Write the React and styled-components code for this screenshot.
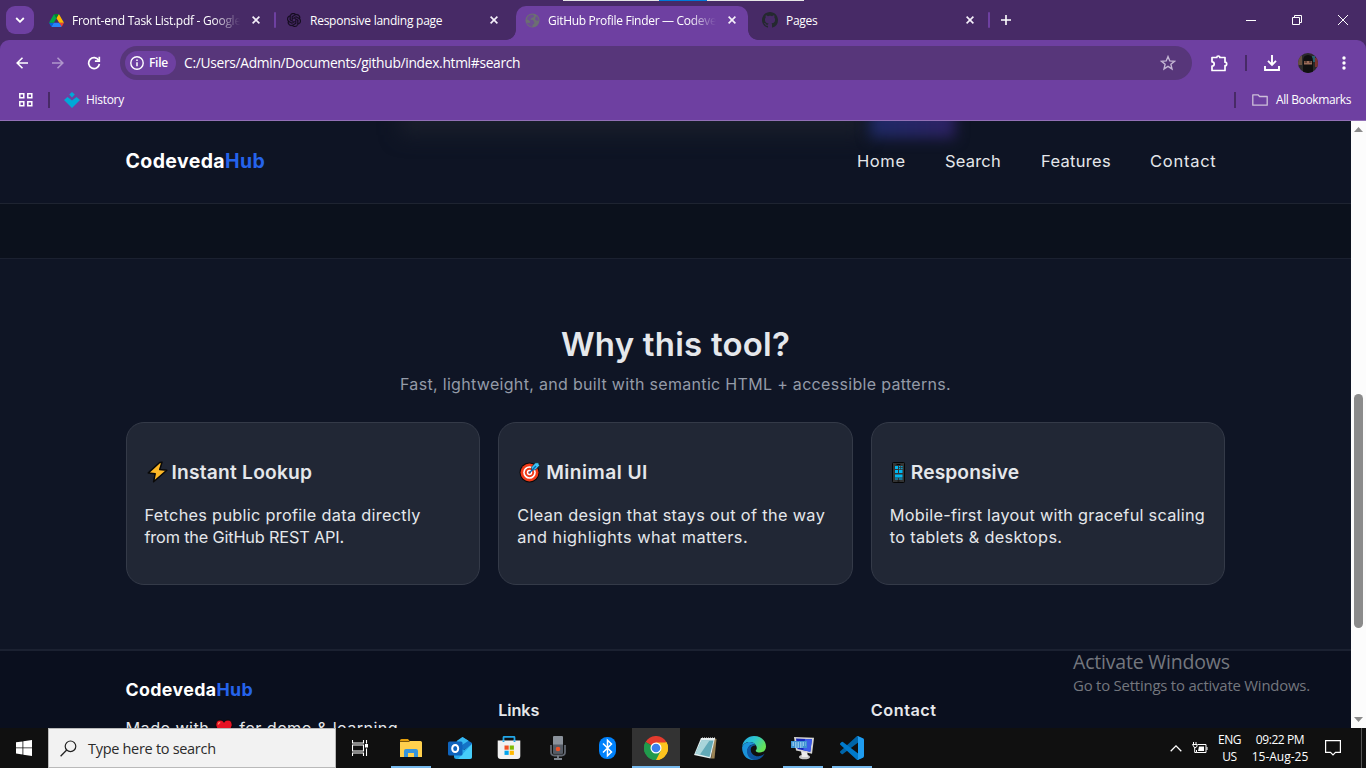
import React from "react";
import styled, { createGlobalStyle, css } from "styled-components";

const UI = `"Open Sans", "Noto Sans", sans-serif`;
const SITE = `Inter, "Liberation Sans", sans-serif`;

const Global = createGlobalStyle`
  * { box-sizing: border-box; }
  body { margin: 0; background: #101010; overflow: hidden; }
  svg { display: block; flex: none; }
`;

const Screen = styled.div`
  position: relative;
  width: 1366px;
  height: 768px;
  display: flex;
  flex-direction: column;
  overflow: hidden;
  font-family: ${UI};
  color: #fff;
`;

/* ---------- text ---------- */
const Label = styled.span`
  font-size: ${(p) => p.$size || 12}px;
  letter-spacing: ${(p) => p.$ls || 0}px;
  line-height: ${(p) => p.$lh || 16}px;
  font-weight: ${(p) => p.$weight || 400};
  white-space: nowrap;
`;

/* ---------- tab strip ---------- */
const TabStrip = styled.div`
  height: 40px;
  flex: none;
  display: flex;
  align-items: flex-start;
  background: #472a66;
  padding-left: 6px;
`;
const TabSearch = styled.div`
  width: 28px;
  height: 28px;
  margin: 6px 5px 0 0;
  border-radius: 9px;
  background: #6e40a1;
  display: grid;
  place-items: center;
`;
const TabCell = styled.div`
  position: relative;
  width: 238px;
  height: 40px;
  flex: none;
  padding: 6px 5px 0 1px;
  &::after {
    content: "";
    display: ${(p) => (p.$divider ? "block" : "none")};
    position: absolute;
    right: 1px;
    top: 12px;
    width: 2px;
    height: 16px;
    border-radius: 1px;
    background: #6e40a1;
  }
`;
const TabBody = styled.div`
  position: relative;
  height: 34px;
  display: flex;
  align-items: center;
  padding: 0 10px 6px 8px;
  border-radius: 10px 10px 0 0;
  background: ${(p) => (p.$active ? "#6e40a1" : "transparent")};
  ${(p) =>
    p.$active &&
    css`
      &::before,
      &::after {
        content: "";
        position: absolute;
        bottom: 0;
        width: 10px;
        height: 10px;
      }
      &::before {
        left: -10px;
        background: radial-gradient(circle at 0 0, #472a66 9.5px, #6e40a1 10.2px);
      }
      &::after {
        right: -10px;
        background: radial-gradient(circle at 100% 0, #472a66 9.5px, #6e40a1 10.2px);
      }
    `}
`;
const TabTitle = styled(Label)`
  width: 168px;
  margin-left: 8px;
  overflow: hidden;
  padding-top: 1px;
  -webkit-mask-image: ${(p) =>
    p.$fade ? "linear-gradient(90deg, #000 84%, transparent 100%)" : "none"};
`;
const Favicon = styled.div`
  width: 16px;
  height: 16px;
  display: grid;
  place-items: center;
`;
const CloseBox = styled.div`
  flex: 1;
  display: flex;
  justify-content: flex-end;
  padding-right: 2px;
`;
const NewTab = styled.div`
  width: 28px;
  height: 40px;
  margin-left: 1px;
  display: grid;
  place-items: center;
`;
const WindowControls = styled.div`
  margin-left: auto;
  display: flex;
  width: 138px;
  height: 40px;
`;
const WindowButton = styled.div`
  width: 46px;
  display: grid;
  place-items: center;
`;
const TopSliver = styled.div`
  position: absolute;
  top: 0;
  left: 563px;
  width: 241px;
  height: 1px;
  background: linear-gradient(90deg, #e6e6e6 96px, #0078d7 96px 144px, #e6e6e6 144px);
`;

/* ---------- toolbar ---------- */
const ToolbarBack = styled.div`
  flex: none;
  background: #472a66;
`;
const Toolbar = styled.div`
  height: 46px;
  display: flex;
  align-items: center;
  padding-left: 4px;
  background: #6e40a1;
  border-radius: 9px 9px 0 0;
`;
const IconButton = styled.div`
  width: ${(p) => p.$w || 36}px;
  height: 34px;
  flex: none;
  display: grid;
  place-items: center;
  opacity: ${(p) => (p.$dim ? 0.45 : 1)};
`;
const Omnibox = styled.div`
  width: 1072px;
  height: 34px;
  flex: none;
  margin-left: 8px;
  border-radius: 17px;
  background: #57367a;
  display: flex;
  align-items: center;
  padding: 0 16px 0 5px;
`;
const FileChip = styled.div`
  width: 51px;
  height: 24px;
  border-radius: 12px;
  background: #6e40a1;
  display: flex;
  align-items: center;
  gap: 5px;
  padding-left: 5px;
  margin-right: 8px;
`;
const StarSlot = styled.div`
  margin-left: auto;
`;
const Divider = styled.div`
  width: 2px;
  height: 16px;
  flex: none;
  background: #472a66;
`;
const DividerSlot = styled.div`
  width: 30px;
  display: grid;
  place-items: center;
`;
const Bookmarks = styled.div`
  height: 34px;
  flex: none;
  display: flex;
  align-items: center;
  background: #6e40a1;
  padding: 0 15px 6px 18px;
`;
const BookmarkName = styled(Label)`
  margin-left: ${(p) => p.$gap}px;
`;
const BookmarkRight = styled.div`
  margin-left: auto;
  display: flex;
  align-items: center;
`;
const FolderSlot = styled.div`
  margin-left: 16px;
`;
const ChromeEdge = styled.div`
  height: 1px;
  flex: none;
  background: #9270b6;
`;

/* ---------- web page ---------- */
const Viewport = styled.div`
  height: 607px;
  flex: none;
  display: flex;
`;
const Site = styled.div`
  position: relative;
  width: 1351px;
  overflow: hidden;
  background: #0b111c;
  font-family: ${SITE};
  color: #e5e7eb;
`;
const Glow = styled.div`
  position: absolute;
  top: ${(p) => p.$top}px;
  left: ${(p) => p.$left}px;
  width: ${(p) => p.$width}px;
  height: ${(p) => p.$height}px;
  background: ${(p) => p.$fill};
  filter: blur(${(p) => p.$blur}px);
`;
const Nav = styled.header`
  position: relative;
  overflow: hidden;
  height: 83px;
  background: #0e1424;
  border-bottom: 1px solid #1e2431;
  padding: 0 125.5px;
`;
const NavInner = styled.div`
  position: relative;
  height: 80px;
  display: flex;
  align-items: center;
`;
const Brand = styled.div`
  font-size: ${(p) => p.$size}px;
  font-weight: 700;
  line-height: 24px;
  letter-spacing: ${(p) => p.$ls}px;
  color: #fff;
  span { color: #2563eb; }
`;
const NavLinks = styled.nav`
  margin-left: auto;
  padding-right: 9.5px;
  display: flex;
  gap: 40px;
`;
const NavLink = styled.a`
  width: ${(p) => p.$w}px;
  font-size: 16.500px;
  line-height: 24px;
  letter-spacing: ${(p) => p.$ls}px;
  white-space: nowrap;
`;
const Strip = styled.div`
  height: 54px;
`;
const Section = styled.section`
  height: 393px;
  background: #0f1525;
  border-top: 1px solid #1b2130;
  border-bottom: 2px solid #1b2131;
  padding: 61px 125.5px 0;
  display: flex;
  flex-direction: column;
  align-items: center;
`;
const Heading = styled.h2`
  margin: 0;
  font-size: 33px;
  font-weight: 600;
  line-height: 48px;
  letter-spacing: ${(p) => p.$ls}px;
`;
const Sub = styled.p`
  margin: 4px 0 26px;
  font-size: 16px;
  line-height: 24px;
  letter-spacing: ${(p) => p.$ls}px;
  color: #949ba8;
  white-space: nowrap;
`;
const Cards = styled.div`
  width: 100%;
  display: grid;
  grid-template-columns: repeat(3, 1fr);
  gap: 18px;
`;
const Card = styled.article`
  height: 163px;
  border: 1px solid #343a48;
  border-radius: 18px;
  background: #212735;
  padding: 37px 0 0 18px;
`;
const CardTitle = styled.h3`
  margin: 0 0 20px;
  display: flex;
  align-items: center;
  font-size: 19.200px;
  font-weight: 600;
  line-height: 24px;
  letter-spacing: ${(p) => p.$ls}px;
  svg { margin: 0 ${(p) => p.$after}px 0 2px; }
`;
const CardLine = styled.div`
  font-size: 16.300px;
  line-height: 22px;
  letter-spacing: ${(p) => p.$ls}px;
  white-space: nowrap;
`;
const Footer = styled.footer`
  height: 140px;
  background: #0a0f1e;
  padding: 27px 125.5px 0;
  display: grid;
  grid-template-columns: 372.67px 372.67px 1fr;
`;
const Made = styled.p`
  margin: 14px 0 0;
  display: flex;
  align-items: center;
  font-size: 16.300px;
  line-height: 24px;
  letter-spacing: ${(p) => p.$ls}px;
  white-space: nowrap;
  svg { margin: 0 6px; }
`;
const FootHead = styled.h4`
  margin: 20px 0 0;
  font-size: 16.300px;
  font-weight: 600;
  line-height: 24px;
  letter-spacing: ${(p) => p.$ls}px;
`;
const ScrollTrack = styled.div`
  width: 15px;
  background: #fcfcfc;
  display: flex;
  flex-direction: column;
  align-items: center;
  padding: 6px 0 6px;
`;
const ScrollThumb = styled.div`
  width: 9px;
  height: 234px;
  margin: 262px 0 auto;
  border-radius: 5px;
  background: #8b8b8b;
`;
const Watermark = styled.div`
  position: absolute;
  left: 1073px;
  top: 650px;
  display: flex;
  flex-direction: column;
  gap: 1px;
  color: #74777e;
`;

/* ---------- taskbar ---------- */
const Taskbar = styled.div`
  height: 40px;
  flex: none;
  display: flex;
  background: #101010;
`;
const TaskCell = styled.div`
  position: relative;
  width: 48px;
  height: 40px;
  margin-right: ${(p) => p.$gap || 0}px;
  display: grid;
  place-items: center;
  background: ${(p) => (p.$active ? "#333" : "transparent")};
  &::after {
    content: "";
    position: absolute;
    bottom: 0;
    left: ${(p) => (p.$active ? 0 : 4)}px;
    right: ${(p) => (p.$active ? 0 : 4)}px;
    height: 2px;
    background: ${(p) => (p.$open ? "#76b9ed" : "transparent")};
  }
`;
const SearchBox = styled.div`
  width: 288px;
  height: 40px;
  border: 1px solid #b9b9b9;
  background: #f2f2f2;
  color: #2b2b2b;
  display: flex;
  align-items: center;
  gap: 11px;
  padding: 1px 0 0 11px;
`;
const Apps = styled.div`
  display: flex;
  margin-left: 3px;
`;
const Tray = styled.div`
  margin-left: auto;
  width: 198px;
  display: flex;
  align-items: center;
`;
const TraySlot = styled.div`
  width: ${(p) => p.$w}px;
  display: flex;
  flex-direction: column;
  align-items: center;
`;
const ShowDesktop = styled.div`
  width: 5px;
  height: 40px;
  margin-left: auto;
  border-left: 1px solid #555;
`;

/* ---------- icons ---------- */
const Svg = ({ w = 16, h, vb, children, ...r }) => (
  <svg width={w} height={h || w} viewBox={vb || `0 0 ${w} ${h || w}`} fill="none" {...r}>
    {children}
  </svg>
);

const Drive = () => (
  <Svg w={15} h={13} vb="0 0 87.3 78">
    <path fill="#0066da" d="m6.6 66.85 3.85 6.65c.8 1.4 1.95 2.5 3.3 3.3l13.75-23.8h-27.5c0 1.55.4 3.1 1.2 4.5z" />
    <path fill="#00ac47" d="m43.65 25-13.75-23.8c-1.35.8-2.5 1.9-3.3 3.3l-25.4 44a9.06 9.06 0 0 0 -1.2 4.5h27.5z" />
    <path fill="#ea4335" d="m73.55 76.8c1.35-.8 2.5-1.9 3.3-3.3l1.6-2.75 7.65-13.25c.8-1.4 1.2-2.95 1.2-4.5h-27.502l5.852 11.5z" />
    <path fill="#00832d" d="m43.65 25 13.75-23.8c-1.35-.8-2.9-1.2-4.5-1.2h-18.5c-1.6 0-3.15.45-4.5 1.2z" />
    <path fill="#2684fc" d="m59.8 53h-32.3l-13.75 23.8c1.35.8 2.9 1.2 4.5 1.2h50.8c1.6 0 3.15-.45 4.5-1.2z" />
    <path fill="#ffba00" d="m73.4 26.5-12.7-22c-.8-1.4-1.95-2.5-3.3-3.3l-13.75 23.8 16.15 28h27.45c0-1.55-.4-3.1-1.2-4.5z" />
  </Svg>
);
const Knot = () => (
  <Svg w={14} vb="0 0 24 24">
    <path
      fill="#160d20"
      stroke="#160d20"
      strokeWidth=".5"
      d="M22.28 9.82a5.98 5.98 0 0 0-.52-4.91 6.05 6.05 0 0 0-6.51-2.9A6.07 6.07 0 0 0 4.98 4.18a5.98 5.98 0 0 0-4 2.9 6.05 6.05 0 0 0 .74 7.1 5.98 5.98 0 0 0 .51 4.91 6.05 6.05 0 0 0 6.51 2.9A5.98 5.98 0 0 0 13.26 24a6.06 6.06 0 0 0 5.77-4.21 5.99 5.99 0 0 0 4-2.9 6.06 6.06 0 0 0-.75-7.07zm-9.02 12.61a4.48 4.48 0 0 1-2.88-1.04l.14-.08 4.78-2.76a.8.8 0 0 0 .39-.68v-6.74l2.02 1.17a.07.07 0 0 1 .04.05v5.58a4.5 4.5 0 0 1-4.49 4.5zM3.6 18.3a4.47 4.47 0 0 1-.54-3.01l.14.08 4.78 2.76a.77.77 0 0 0 .78 0l5.84-3.37v2.33a.08.08 0 0 1-.03.06L9.74 19.95a4.5 4.5 0 0 1-6.14-1.65zM2.34 7.9a4.49 4.49 0 0 1 2.37-1.97V11.6a.77.77 0 0 0 .39.68l5.81 3.35-2.02 1.17a.08.08 0 0 1-.07 0l-4.83-2.79A4.5 4.5 0 0 1 2.34 7.87zm16.6 3.86-5.84-3.39L15.12 7.2a.08.08 0 0 1 .07 0l4.83 2.79a4.49 4.49 0 0 1-.68 8.1v-5.68a.79.79 0 0 0-.4-.66zm2.01-3.02-.14-.09-4.77-2.78a.78.78 0 0 0-.79 0L9.41 9.23V6.9a.07.07 0 0 1 .03-.06l4.83-2.79a4.5 4.5 0 0 1 6.68 4.66zM8.31 12.86l-2.02-1.16a.08.08 0 0 1-.04-.06V6.07a4.5 4.5 0 0 1 7.38-3.45l-.14.08-4.78 2.76a.8.8 0 0 0-.4.68zm1.1-2.36L12 9l2.61 1.5v3L12 15l-2.6-1.5z"
    />
  </Svg>
);
const Globe = () => (
  <Svg w={15}>
    <circle cx="7.5" cy="7.5" r="7" fill="#6c6f72" />
    <path
      d="M3 3.5C4.2 2 6 1.3 7.7 1.4L9.3 3 8 4.6 6.3 5 5.5 6.8l2.3.3L9.3 9v1.6L7.5 12v1.8C5 14 2.4 12.200 1.500 9.800L4.500 10l.8-1.500L3.300 6.800 1.500 6.600zM10.500 4.500l1-1.500 1.700 2.200.6 2.300-2 .2L10 6.300z"
      fill="#6e40a1"
      opacity=".7"
    />
  </Svg>
);
const GitHubMark = () => (
  <Svg w={16}>
    <path
      fill="#24292f"
      d="M8 0C3.58 0 0 3.58 0 8c0 3.54 2.29 6.53 5.47 7.59.4.07.55-.17.55-.38 0-.19-.01-.82-.01-1.49-2.01.37-2.53-.49-2.69-.94-.09-.23-.48-.94-.82-1.13-.28-.15-.68-.52-.01-.53.63-.01 1.08.58 1.23.82.72 1.21 1.87.87 2.33.66.07-.52.28-.87.51-1.07-1.78-.2-3.64-.89-3.64-3.95 0-.87.31-1.59.82-2.15-.08-.2-.36-1.02.08-2.12 0 0 .67-.21 2.2.82.64-.18 1.32-.27 2-.27s1.36.09 2 .27c1.530-1.040 2.200-.82 2.200-.82.44 1.100.16 1.920.08 2.120.51.56.82 1.270.82 2.150 0 3.070-1.870 3.750-3.650 3.950.29.25.54.73.54 1.480 0 1.070-.01 1.930-.01 2.200 0 .21.15.46.55.38A8.010 8.010 0 0 0 16 8c0-4.420-3.580-8-8-8z"
    />
  </Svg>
);
const Close = () => (
  <Svg w={8}>
    <path d="M.6.6l6.800 6.800M7.400.6L.6 7.400" stroke="#f5f0fa" strokeWidth="1.600" />
  </Svg>
);
const Bolt = () => (
  <Svg w={21} h={22}>
    <path d="M12.700 1.500L1.300 11.900l6.900.8L6.600 20.800 19.800 9.300l-7.100-.7L15 1.300z" fill="#fdb827" stroke="#090909" strokeWidth="1.500" strokeLinejoin="round" />
  </Svg>
);
const Target = () => (
  <Svg w={22} h={22}>
    <circle cx="10.500" cy="11.500" r="10" fill="#0a0a0a" />
    <circle cx="10.500" cy="11.500" r="9" fill="#f03a17" />
    <circle cx="10.500" cy="11.500" r="6.300" fill="#fff" />
    <circle cx="10.500" cy="11.500" r="4.700" fill="#f03a17" />
    <circle cx="10.500" cy="11.500" r="2.700" fill="#fff" />
    <circle cx="10.500" cy="11.500" r="1.300" fill="#f03a17" />
    <path d="M12.500 6L16.500 1.800h3.300V3.500l1 .8-4.300 4.500-4 .4z" fill="#3fc4f5" stroke="#0a0a0a" strokeWidth=".5" />
    <path d="M10.300 12L17 5" stroke="#0067b8" strokeWidth="1.300" />
  </Svg>
);
const Phone = () => (
  <Svg w={13} h={21}>
    <rect x=".5" y=".5" width="12" height="20" rx="1" fill="#333" stroke="#050505" />
    <path d="M4.500 2.500h4M5.500 19h2" stroke="#080808" />
    <path d="M3 4h3v3H3zM3 8h3v3H3zM7 8h3.500v3H7zM3 12.500h7.500v3H3zM3 16.500h3v1H3zM7 16.500h3.500v1H7z" fill="#00b7f1" />
    <path d="M7 4h1.300v1.200H7zM9.200 4h1.300v1.200H9.200zM7 6h1.300v1.200H7zM9.200 6h1.300v1.200H9.200z" fill="#00b7f1" />
  </Svg>
);
const Heart = () => (
  <Svg w={18} h={18}>
    <path d="M9 17L2.200 9.500C-.8 5.500 1.500 1 5 1c2 0 3.300 1 4 2.300C9.700 2 11 1 13 1c3.500 0 5.800 4.500 2.800 8.500z" fill="#e81123" stroke="#0a0a0a" />
    <path d="M3.200 5.500c.2-1.300 1-2 2-2" stroke="#ff8a65" strokeWidth="1.300" />
  </Svg>
);

const Explorer = () => (
  <Svg w={22} h={18}>
    <path d="M0 1.500Q0 0 1.500 0H8l2 2.500H0z" fill="#e59f0b" />
    <path d="M0 3h9l1-1h10.500q1.500 0 1.500 1.500V18H0z" fill="#ffd04d" />
    <path d="M4 18v-6q0-2 2-2h10q2 0 2 2v6h-4v-4H8v4z" fill="#3694dc" />
  </Svg>
);
const Outlook = () => (
  <Svg w={24} h={22}>
    <path d="M6 6.500L14.500 0 24 6v2L14 14z" fill="#1473c6" />
    <path d="M9 3.700L14.500 0l6 3.800L11 10z" fill="#35b8f1" />
    <path d="M6 20V10l10 3 8-6v12.500q0 2.500-2.500 2.500H8.500Q6 22 6 20z" fill="#28a8ea" />
    <path d="M24 7v12.500q0 2.500-2.500 2.500H10z" fill="#50d9ff" opacity=".75" />
    <rect y="4.500" width="14.500" height="14" rx="1.500" fill="#0f64bd" />
    <ellipse cx="7.200" cy="11.500" rx="3" ry="3.500" stroke="#fff" strokeWidth="2" />
  </Svg>
);
const Store = () => (
  <Svg w={24} h={24}>
    <path d="M6.500 6V1.700q0-.9.900-.9h9.200q.9 0 .9.900V6" stroke="#22a7e8" strokeWidth="1.800" />
    <path d="M.7 4.500h22.600V20q0 3-3 3H3.700q-3 0-3-3z" fill="#f1f1f1" />
    <path d="M6.500 4.500V6M17.500 4.500V6" stroke="#22a7e8" strokeWidth="1.800" />
    <path d="M7.500 9.500h4.200v4.200H7.500z" fill="#f25022" />
    <path d="M12.700 9.500h4.200v4.200h-4.200z" fill="#7fba00" />
    <path d="M7.500 14.700h4.200v4.200H7.500z" fill="#00a4ef" />
    <path d="M12.700 14.700h4.200v4.200h-4.200z" fill="#ffb900" />
  </Svg>
);
const Mic = () => (
  <Svg w={16} h={24}>
    <path d="M1 9v7q0 3.500 3.500 3.500h7q3.500 0 3.500-3.500V9" stroke="#626872" strokeWidth="1.800" />
    <rect x="3" y="0" width="10" height="17.500" rx="1" fill="#8b929b" />
    <path d="M3 8.500h10v9H3z" fill="#565c66" />
    <circle cx="8" cy="13" r="2.300" fill="#ed5127" />
    <path d="M8 19.500V22M4 23h8" stroke="#7d848d" strokeWidth="1.800" />
  </Svg>
);
const Bluetooth = () => (
  <Svg w={17} h={22}>
    <rect width="17" height="22" rx="8" fill="#0082fc" />
    <path d="M4 6.500l8.500 8.500-4 3.800V3.200l4 3.800L4 15.500" stroke="#fff" strokeWidth="1.500" />
  </Svg>
);
const ChromeLogo = () => (
  <Svg w={24} vb="0 0 48 48">
    <path d="M24 24L3.200 12A24 24 0 0 1 44.800 12z" fill="#e33b2e" />
    <path d="M24 24L44.800 12A24 24 0 0 1 24 48z" fill="#fcc31e" />
    <path d="M24 24l0 24A24 24 0 0 1 3.200 12z" fill="#209a4c" />
    <path d="M24 13h21.300A24 24 0 0 1 24 48l9.500-18.500z" fill="#fcc31e" />
    <path d="M14.500 29.500L3.200 12A24 24 0 0 0 24 48l9.500-18.500z" fill="#209a4c" />
    <circle cx="24" cy="24" r="11" fill="#fff" />
    <circle cx="24" cy="24" r="8.700" fill="#3a80ee" />
  </Svg>
);
const Notepad = () => (
  <Svg w={23} h={22}>
    <path d="M20 1l2.500 1-2 19.500H17z" fill="#9b8355" />
    <path d="M7 1h14l-4.500 20.500L0 18z" fill="#e3eff0" />
    <path d="M7.500 3.500h12L15.500 20 1.500 16.500z" fill="#61aab8" />
    <path d="M7.500 3.500h8L6 17.500l-4.500-1z" fill="#a9d5da" />
    <path d="M8 1.500h13" stroke="#eee" strokeWidth="1.800" strokeDasharray="1 1" />
  </Svg>
);
const Edge = () => (
  <Svg w={24}>
    <defs>
      <linearGradient id="edgeTop" x1="0" y1="0" x2="1" y2=".5">
        <stop offset="0" stopColor="#24a5e5" />
        <stop offset=".5" stopColor="#2cc6ce" />
        <stop offset="1" stopColor="#66e256" />
      </linearGradient>
      <linearGradient id="edgeBottom" x1="0" y1="0" x2="1" y2="1">
        <stop offset="0" stopColor="#0f5aa8" />
        <stop offset="1" stopColor="#0c4f98" />
      </linearGradient>
    </defs>
    <path d="M.2 10.500C1 4.500 6 0 12 0c7.500 0 12 5.300 12 10.500 0 3.800-2.800 6-6 6-2.500 0-4.300-.8-4.300-1.800 0-.7 1.100-1 1.100-2.700C14.800 8.700 11.500 6 8 6 4 6 1.200 8 .2 10.500z" fill="url(#edgeTop)" />
    <path d="M.1 11.500C.9 8.300 4 6 7.800 6c2.500 0 5 1.200 6.200 3.200-1-.6-2-.7-2.800-.7-3.500 0-5.700 3-5.700 6.300 0 5 4.500 9 9.500 8.700C7 26 0 20 .1 11.500z" fill="#1a93da" />
    <path d="M8.800 12.800c-.6 5.200 4.500 8.200 8.700 7.200 2.500-.6 4-1.500 5-2.200C20.500 21.500 16.500 24 12.500 24 8 23.500 5 19.700 5 15.500 5 12 7.500 8.800 11.200 8.800c1 0 2 .3 2.800.8-3.200-.3-5 1.500-5.200 3.200z" fill="url(#edgeBottom)" />
  </Svg>
);
const Remote = () => (
  <Svg w={24} h={24}>
    <ellipse cx="13.500" cy="21" rx="5.500" ry="2.300" fill="#c9c9c9" />
    <path d="M10 15h6l1 6h-6z" fill="#ececec" />
    <path d="M3 1l20 .8-2 16L5 14.500z" fill="#d5d5d5" />
    <path d="M5 2.500l16 .8-1.700 12.500L6.500 13z" fill="#1526bd" />
    <path d="M14 3l7 .3-1.700 12.500-7-1.500z" fill="#3d5ee8" />
    <rect x="0" y="5" width="16" height="7" fill="#3e92d3" />
    <path d="M1.500 7h13M1.500 9h13M4 11h8" stroke="#d8f2ff" strokeDasharray="1.500 1" />
  </Svg>
);
const VSCode = () => (
  <Svg w={24} vb="0 0 100 100">
    <path d="M96.500 10.800L75.900.9a6.200 6.200 0 0 0-7.100 1.200L1.300 63.600a4.200 4.200 0 0 0 0 6.200l5.500 5a4.200 4.200 0 0 0 5.300.2L93.400 13.400c2.700-2.100 6.600-.1 6.600 3.300v-.3a6.200 6.200 0 0 0-3.500-5.600z" fill="#0065a9" />
    <path d="M96.500 89.200l-20.600 9.900a6.200 6.200 0 0 1-7.100-1.200L1.300 36.400a4.200 4.200 0 0 1 0-6.200l5.500-5a4.200 4.200 0 0 1 5.300-.2l81.300 61.600c2.700 2.100 6.600.1 6.600-3.300v.3a6.200 6.200 0 0 1-3.500 5.600z" fill="#007acc" />
    <path d="M75.900 99.100a6.200 6.200 0 0 1-7.100-1.200C71.100 100.200 75 98.600 75 95.300V4.700c0-3.300-3.900-4.900-6.200-2.600A6.200 6.200 0 0 1 75.900.9l20.600 9.900a6.200 6.200 0 0 1 3.500 5.600v67.200a6.200 6.200 0 0 1-3.500 5.600z" fill="#1f9cf0" />
  </Svg>
);

const tabs = [
  { title: "Front-end Task List.pdf - Google", icon: <Drive />, ls: -0.27, fade: true, divider: true },
  { title: "Responsive landing page", icon: <Knot />, ls: -0.25 },
  { title: "GitHub Profile Finder — Codeveda", icon: <Globe />, ls: -0.3, fade: true, active: true },
  { title: "Pages", icon: <GitHubMark />, ls: -0.3, divider: true },
];

const links = [
  { text: "Home", w: 48, ls: 0.6 },
  { text: "Search", w: 56, ls: 0.2 },
  { text: "Features", w: 69, ls: 0.3 },
  { text: "Contact", w: 66, ls: 0.75 },
];

const cards = [
  { icon: <Bolt />, after: 4, title: "Instant Lookup", tls: 0.22, lines: [["Fetches public profile data directly", 0.3], ["from the GitHub REST API.", -0.17]] },
  { icon: <Target />, after: 5, title: "Minimal UI", tls: 0.45, lines: [["Clean design that stays out of the way", 0.36], ["and highlights what matters.", 0.51]] },
  { icon: <Phone />, after: 6, title: "Responsive", tls: 0.1, lines: [["Mobile-first layout with graceful scaling", 0.26], ["to tablets & desktops.", 0.29]] },
];

const apps = [
  { icon: <Explorer />, open: true },
  { icon: <Outlook /> },
  { icon: <Store /> },
  { icon: <Mic /> },
  { icon: <Bluetooth /> },
  { icon: <ChromeLogo />, open: true, active: true },
  { icon: <Notepad /> },
  { icon: <Edge /> },
  { icon: <Remote />, open: true },
  { icon: <VSCode />, open: true },
];

function BrowserChrome() {
  return (
    <>
      <TabStrip>
        <TabSearch>
          <Svg w={10} h={6}><path d="M1.200 1l3.800 3.800L8.800 1" stroke="#fff" strokeWidth="1.800" /></Svg>
        </TabSearch>
        {tabs.map((t) => (
          <TabCell key={t.title} $divider={t.divider}>
            <TabBody $active={t.active}>
              <Favicon>{t.icon}</Favicon>
              <TabTitle $ls={t.ls} $fade={t.fade}>{t.title}</TabTitle>
              <CloseBox><Close /></CloseBox>
            </TabBody>
          </TabCell>
        ))}
        <NewTab>
          <Svg w={10}><path d="M5 0v10M0 5h10" stroke="#fff" strokeWidth="1.600" /></Svg>
        </NewTab>
        <WindowControls>
          <WindowButton><Svg w={10} h={1}><path d="M0 .5h10" stroke="#fff" /></Svg></WindowButton>
          <WindowButton>
            <Svg w={10}><path d="M.5 2.500h7v7h-7zM2.500 2.500v-2h7v7h-2" stroke="#fff" /></Svg>
          </WindowButton>
          <WindowButton><Svg w={10}><path d="M0 0l10 10M10 0L0 10" stroke="#fff" /></Svg></WindowButton>
        </WindowControls>
      </TabStrip>
      <ToolbarBack>
        <Toolbar>
          <IconButton>
            <Svg w={12}><path d="M12 6H1.500M6.500.8L1.200 6l5.300 5.200" stroke="#fff" strokeWidth="1.600" /></Svg>
          </IconButton>
          <IconButton $dim>
            <Svg w={12}><path d="M0 6h10.500M5.500.8L10.800 6l-5.300 5.200" stroke="#fff" strokeWidth="1.600" /></Svg>
          </IconButton>
          <IconButton>
            <Svg w={14}>
              <path d="M11.700 4.300A5.400 5.400 0 1 0 12.400 8" stroke="#fff" strokeWidth="1.700" />
              <path d="M12.300.8v4.400H7.900" stroke="#fff" strokeWidth="1.700" />
            </Svg>
          </IconButton>
          <Omnibox>
            <FileChip>
              <Svg w={14}>
                <circle cx="7" cy="7" r="6.200" stroke="#fff" strokeWidth="1.400" />
                <path d="M7 6.300v4M7 3.500v1.500" stroke="#fff" strokeWidth="1.500" />
              </Svg>
              <Label $weight={600} $ls={-0.3}>File</Label>
            </FileChip>
            <Label $size={13.800} $ls={-0.31} $lh={20}>C:/Users/Admin/Documents/github/index.html#search</Label>
            <StarSlot>
              <Svg w={16}>
                <path d="M8 1.600l1.800 4.300 4.700.4-3.600 3 1.100 4.600-4-2.500-4 2.500 1.100-4.600-3.600-3 4.700-.4z" stroke="#c4b6d4" strokeWidth="1.400" />
              </Svg>
            </StarSlot>
          </Omnibox>
          <IconButton $w={53}>
            <Svg w={18} h={18}>
              <path d="M2 3.500h4.800a1.500 1.500 0 0 1 3 0H15v4.700a1.700 1.700 0 0 1 0 3.400v4.900H2v-4.300a2.200 2.200 0 0 0 0-4.400z" stroke="#fff" strokeWidth="1.700" strokeLinejoin="round" />
            </Svg>
          </IconButton>
          <Divider />
          <IconButton $w={50}>
            <Svg w={16}>
              <path d="M8 0v9M4 5.800l4 4 4-4M1 11v4h14v-4" stroke="#fff" strokeWidth="1.900" />
            </Svg>
          </IconButton>
          <IconButton $w={22}>
            <Svg w={20}>
              <defs><clipPath id="face"><circle cx="10" cy="10" r="10" /></clipPath></defs>
              <g clipPath="url(#face)">
                <path d="M0 0h20v20H0z" fill="#2b2a2a" />
                <path d="M0 3h4v9H0z" fill="#67503f" />
                <path d="M14 3h3v6h-3z" fill="#29606d" />
                <path d="M17 5h3v9h-3z" fill="#7a3430" />
                <path d="M5 20V8q0-6 5-6t5 6v12z" fill="#101010" />
                <path d="M6 8h8v3.500H6z" fill="#9a6c58" />
                <path d="M6.500 9h2.500M11 9h2.500" stroke="#2a1a18" />
              </g>
            </Svg>
          </IconButton>
          <IconButton $w={50}>
            <Svg w={4} h={14}>
              <circle cx="2" cy="2" r="1.700" fill="#fff" />
              <circle cx="2" cy="7" r="1.700" fill="#fff" />
              <circle cx="2" cy="12" r="1.700" fill="#fff" />
            </Svg>
          </IconButton>
        </Toolbar>
      </ToolbarBack>
      <Bookmarks>
        <Svg w={16}>
          <path d="M1.800 1.800h4v4h-4zM9.800 1.800h4v4h-4zM1.800 9.800h4v4h-4zM9.800 9.800h4v4h-4z" stroke="#fff" strokeWidth="1.500" />
        </Svg>
        <DividerSlot><Divider /></DividerSlot>
        <Svg w={16}>
          <path d="M8 16L0 8l3.500-3L8 8.500 12.500 5 16 8z" fill="#00a9d8" />
          <path d="M8 0l2.800 2.600L8 5.400 5.200 2.600z" fill="#00a9d8" />
        </Svg>
        <BookmarkName $gap={6} $ls={-0.3}>History</BookmarkName>
        <BookmarkRight>
          <Divider />
          <FolderSlot>
            <Svg w={16} h={12}>
              <path d="M.8.8H6l1.600 1.700h7.600v8.700H.8z" stroke="#cdbfd9" strokeWidth="1.300" strokeLinejoin="round" />
            </Svg>
          </FolderSlot>
          <BookmarkName $gap={8} $ls={-0.38}>All Bookmarks</BookmarkName>
        </BookmarkRight>
      </Bookmarks>
      <ChromeEdge />
      <TopSliver />
    </>
  );
}

function WebPage() {
  return (
    <Viewport>
      <Site>
        <Nav>
          <Glow $top={-24} $left={400} $width={465} $height={38} $fill="#191e2b" $blur={10} />
          <Glow $top={-20} $left={870} $width={85} $height={37} $fill="linear-gradient(90deg, #1e2a66, #2e2265)" $blur={7} />
          <NavInner>
            <Brand $size={19.500} $ls={0.38}>Codeveda<span>Hub</span></Brand>
            <NavLinks>
              {links.map((l) => (
                <NavLink key={l.text} $w={l.w} $ls={l.ls}>{l.text}</NavLink>
              ))}
            </NavLinks>
          </NavInner>
        </Nav>
        <Strip />
        <Section>
          <Heading $ls={0.22}>Why this tool?</Heading>
          <Sub $ls={0.315}>Fast, lightweight, and built with semantic HTML + accessible patterns.</Sub>
          <Cards>
            {cards.map((c) => (
              <Card key={c.title}>
                <CardTitle $ls={c.tls} $after={c.after}>{c.icon}{c.title}</CardTitle>
                {c.lines.map(([text, ls]) => (
                  <CardLine key={text} $ls={ls}>{text}</CardLine>
                ))}
              </Card>
            ))}
          </Cards>
        </Section>
        <Footer>
          <div>
            <Brand $size={17.800} $ls={0.36}>Codeveda<span>Hub</span></Brand>
            <Made $ls={0.4}>Made with <Heart /> for demo &amp; learning</Made>
          </div>
          <FootHead $ls={-0.1}>Links</FootHead>
          <FootHead $ls={0.5}>Contact</FootHead>
        </Footer>
      </Site>
      <ScrollTrack>
        <Svg w={9} h={5}><path d="M4.500 0L9 5H0z" fill="#8b8b8b" /></Svg>
        <ScrollThumb />
        <Svg w={9} h={5}><path d="M4.500 5L9 0H0z" fill="#8b8b8b" /></Svg>
      </ScrollTrack>
    </Viewport>
  );
}

function WindowsTaskbar() {
  return (
    <Taskbar>
      <TaskCell>
        <Svg w={16}>
          <path d="M0 2.300L6.500 1.400v6.100H0zM7.300 1.300L16 0v7.500H7.300zM0 8.300h6.500v6.200L0 13.600zM7.300 8.300H16V16l-8.700-1.300z" fill="#fff" />
        </Svg>
      </TaskCell>
      <SearchBox>
        <Svg w={17}>
          <circle cx="10.500" cy="6.300" r="5.300" stroke="#222" strokeWidth="1.200" />
          <path d="M6.700 10L.6 16.200" stroke="#222" strokeWidth="1.300" />
        </Svg>
        <Label $size={14.500} $ls={-0.3} $lh={20}>Type here to search</Label>
      </SearchBox>
      <TaskCell>
        <Svg w={17} h={16}>
          <path d="M.5 0v3h11V0M.5 16v-3h11v3M.5 5h11v6H.5zM14.500 0v3.500M14.500 8.500V16" stroke="#fff" strokeWidth="1.100" />
          <path d="M13 4h3v3.500h-3z" fill="#fff" />
        </Svg>
      </TaskCell>
      <Apps>
        {apps.map((a, i) => (
          <TaskCell key={i} $gap={1} $open={a.open} $active={a.active}>{a.icon}</TaskCell>
        ))}
      </Apps>
      <Tray>
        <TraySlot $w={16}>
          <Svg w={12} h={7}><path d="M.7 6.200L6 .9l5.300 5.300" stroke="#fff" strokeWidth="1.300" /></Svg>
        </TraySlot>
        <TraySlot $w={32}>
          <Svg w={16} h={12}>
            <path d="M5.500 2.500h8.500v8H4.500V8M15 5v3" stroke="#fff" />
            <path d="M7 4.500h5v4.500H6z" fill="#fff" />
            <path d="M1.500 0v2M4 0v2M.5 2.500h4.500v2L2.700 6zM2.700 6v4.500H4.500" stroke="#fff" />
          </Svg>
        </TraySlot>
        <TraySlot $w={27}>
          <Label $lh={17} $ls={-0.4}>ENG</Label>
          <Label $lh={17} $ls={-0.4}>US</Label>
        </TraySlot>
        <TraySlot $w={74}>
          <Label $lh={17} $ls={-0.4}>09:22 PM</Label>
          <Label $lh={17} $ls={0}>15-Aug-25</Label>
        </TraySlot>
        <TraySlot $w={32}>
          <Svg w={16} h={16}>
            <path d="M.6.6h14.800v11.800h-4.900L8 15l-2.500-2.600H.6z" stroke="#fff" strokeWidth="1.200" />
          </Svg>
        </TraySlot>
        <ShowDesktop />
      </Tray>
    </Taskbar>
  );
}

export default function App() {
  return (
    <Screen>
      <Global />
      <BrowserChrome />
      <WebPage />
      <WindowsTaskbar />
      <Watermark>
        <Label $size={19.500} $lh={24} $ls={-0.2}>Activate Windows</Label>
        <Label $size={14.900} $lh={20} $ls={-0.2}>Go to Settings to activate Windows.</Label>
      </Watermark>
    </Screen>
  );
}
